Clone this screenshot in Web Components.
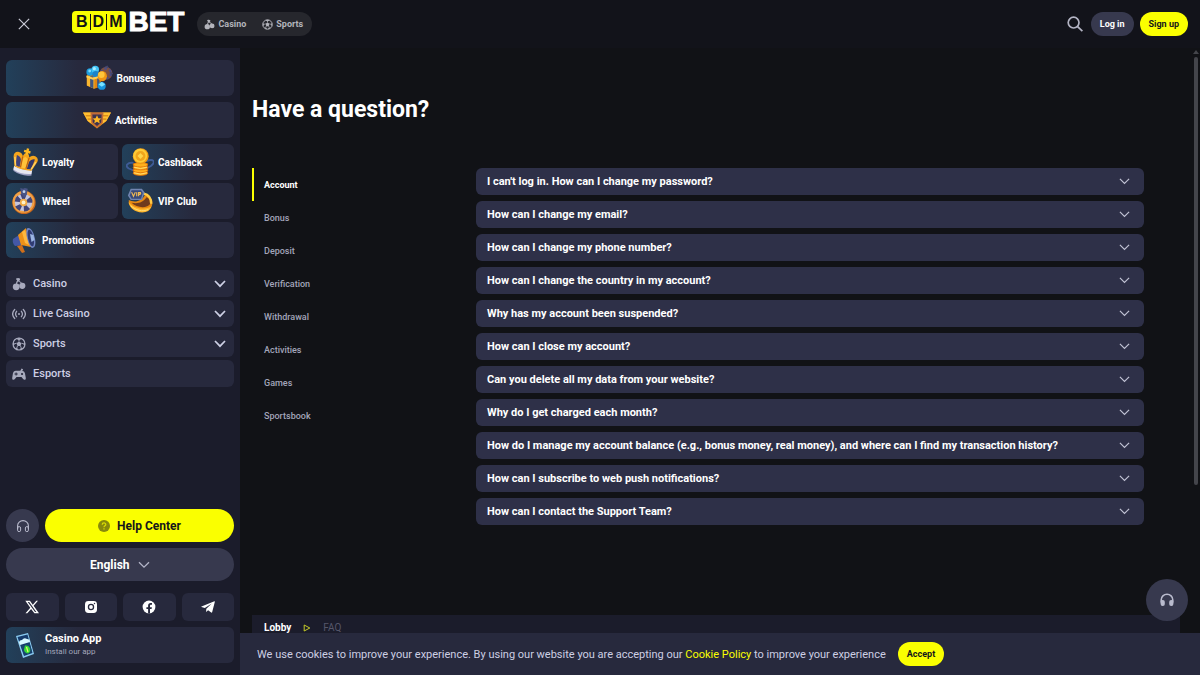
<!DOCTYPE html>
<html lang="en">
<head>
<meta charset="utf-8">
<meta name="viewport" content="width=device-width, initial-scale=1">
<title>BDMBET – FAQ</title>
<style>
  :root {
    --accent: #faff00;
    --page: #111216;
    --side: #1b1c2b;
    --tile: #27293d;
    --faq: #2e3048;
    --pill: #37394e;
    --muted: #a3a5ba;
    --soft: #cdcfe4;
  }
  html, body { height: 100%; }
  body { margin: 0; background: var(--page); color: #fff; font-family: Roboto, "Liberation Sans", sans-serif; font-size: 12px; }
</style>
</head>
<body>
<bdm-app></bdm-app>
<script>
const ICONS = {
  close: ['0 0 14 14', '<path d="M1 1l12 12M13 1L1 13" stroke="#c9cad6" stroke-width="1.4" fill="none"/>'],
  search: ['0 0 16 16', '<circle cx="6.6" cy="6.6" r="5.4" fill="none" stroke="#b3b4c4" stroke-width="1.7"/><path d="M10.6 10.6l4.8 4.6" stroke="#b3b4c4" stroke-width="1.8"/>'],
  chevron: ['0 0 12 12', '<path d="M1 3.2l5 5 5-5" fill="none" stroke="currentColor" stroke-width="1.3"/>'],
  chevronBold: ['0 0 12 12', '<path d="M1 3l5 5.2L11 3" fill="none" stroke="currentColor" stroke-width="1.7"/>'],
  cherry: ['0 0 14 14', '<g fill="currentColor"><circle cx="4.200" cy="9.800" r="3.400"/><circle cx="10.300" cy="8.800" r="3.100"/><path d="M4 1.600c1.500-.9 3-.8 4.200.2 0 1-.4 1.700-1 2.100 1.200.4 2.300 1.200 3.100 2.300l-.9.600C8.300 5.500 7.200 4.900 6 4.600c-.5.700-.8 1.500-.9 2.400H4c0-1.500.4-2.600 1.200-3.500-.7-.4-1.100-1-1.200-1.900z"/></g>'],
  live: ['0 0 14 14', '<g fill="none" stroke="currentColor" stroke-width="1.300" stroke-linecap="round"><path d="M2.700 2.500C.2 5.200.2 8.800 2.700 11.500M11.300 2.500c2.500 2.700 2.500 6.300 0 9M4.600 4.300c-1.300 1.700-1.300 3.700 0 5.400M9.400 4.300c1.300 1.700 1.300 3.700 0 5.400"/></g><circle cx="7" cy="7" r="1" fill="currentColor"/>'],
  ball: ['0 0 14 14', '<circle cx="7" cy="7" r="6" fill="none" stroke="currentColor" stroke-width="1.200"/><path d="M7 4.400l2.500 1.800-1 2.900h-3l-1-2.900zM4 1.700L7 3.200l3-1.500L7 .8zM1.200 4.500l1.300 2.700L1 9.500V5.800zM12.800 4.500l-1.300 2.700L13 9.500V5.800zM2.600 11l2.900.3.900 1.700-2-.7zM11.400 11l-2.900.3-.9 1.700 2-.7z" fill="currentColor"/><path d="M7 2.500v2M2 7l2.500-.8M12 7l-2.500-.8M5.500 9l-1 2.500M8.500 9l1 2.500" stroke="currentColor" stroke-width=".9"/>'],
  pad: ['0 0 14 14', '<path fill="currentColor" fill-rule="evenodd" d="M3.800 3.800h4.500l1.300-2.300 1.500.7-.8 1.700c1.700.1 2.400 1.200 2.700 2.700l.8 4.300c.2 2.100-1.700 2.500-2.700 1.200L9.500 10h-5l-1.600 2.100c-1 1.300-2.900.9-2.700-1.200L.9 6.600C1.200 4.900 2.200 3.800 3.800 3.800zm-.2 1.800v1H2.500v1h1.100v1h1v-1h1.100v-1H4.600v-1zM10 5.900a1.100 1.100 0 1 0 .1 2.200 1.100 1.100 0 0 0-.1-2.200z"/>'],
  phones: ['0 0 14 14', '<path d="M1.600 10V6.800a5.400 5.200 0 0 1 10.800 0V10" fill="none" stroke="currentColor" stroke-width="1.100"/><rect x="1.600" y="7.600" width="3" height="5" rx="1.400" fill="none" stroke="currentColor"/><rect x="9.400" y="7.600" width="3" height="5" rx="1.400" fill="none" stroke="currentColor"/>'],
  phonesFill: ['0 0 14 14', '<path d="M1.200 9.500V7a5.800 5.800 0 0 1 11.600 0v2.500" fill="none" stroke="currentColor" stroke-width="1.600"/><rect x=".6" y="7" width="4.200" height="6" rx="1.900" fill="currentColor"/><rect x="9.200" y="7" width="4.200" height="6" rx="1.900" fill="currentColor"/>'],
  help: ['0 0 12 12', '<circle cx="6" cy="6" r="6" fill="#87890c"/><path d="M4.200 4.700c0-2.300 3.600-2.300 3.600-.1C7.800 5.900 6 5.800 6 7.200M6 8.300v1.200" fill="none" stroke="#d9de04" stroke-width="1.200"/>'],
  x: ['0 0 14 14', '<path fill="#fff" fill-rule="evenodd" d="M.3.800h4.600l2.900 3.900L11.300.800h1.700L8.600 5.800l5.400 7.400H9.400L6.100 8.900l-3.800 4.300H.500l4.800-5.400zM2.700 2.100l7.300 9.800h1.300L4.200 2.100z"/>'],
  insta: ['0 0 14 14', '<path fill="#fff" fill-rule="evenodd" d="M4.400 1h5.200A3.400 3.400 0 0 1 13 4.400v5.200A3.400 3.400 0 0 1 9.600 13H4.400A3.400 3.400 0 0 1 1 9.600V4.400A3.400 3.400 0 0 1 4.400 1zM7 3.800a3.200 3.200 0 1 0 0 6.400 3.200 3.200 0 0 0 0-6.400zm3.500-1a.7.7 0 1 0 0 1.400.7.7 0 0 0 0-1.400zM7 5.100a1.900 1.900 0 1 1 0 3.800 1.900 1.900 0 0 1 0-3.800z"/>'],
  facebook: ['0 0 14 14', '<circle cx="7" cy="7" r="6.400" fill="#fff"/><path fill="#27293d" d="M6.100 13.400V9H4.400V7.200h1.700V5.600c0-1.700 1-2.600 2.500-2.600l1.400.1v1.600h-.9c-.8 0-1.100.5-1.100 1v1.500h1.900L9.600 9H8v4.400z"/>'],
  telegram: ['0 0 14 14', '<path fill="#fff" d="M13.400 1.200L.5 6.500c-.4.200-.3.500 0 .6l3.300 1 7-4.600-5.500 5.300-.2 3.300 2-1.800 3.100 2.200c.5.300.9.100 1-.5L13.800 2c.1-.6.100-.9-.4-.8z"/>'],
  play: ['0 0 8 8', '<path d="M1.200 1l5.600 3-5.600 3z" fill="none" stroke="#c5cb28" stroke-width="1"/>'],
  gift: ['0 0 30 28', '<circle cx="22.500" cy="9" r="6.800" fill="#7d5040"/><circle cx="22.500" cy="9" r="5.200" fill="none" stroke="#4a4d87" stroke-width="2.400" stroke-dasharray="3 2.500"/><path d="M21 2l3-1.500 2 3M27 7l3 2-2 3" fill="#41466f"/><path d="M2 11h15v12l-7 2.500L2 22z" fill="#e2860f"/><path d="M2 11l8 2.500v12L2 22z" fill="#f9b730"/><path d="M5.500 12h3.500v13l-3.500-1.300zM13 12h2.500v11.500L13 24.500z" fill="#41557f"/><circle cx="5.500" cy="7.500" r="4" fill="#1e9ddd"/><circle cx="11" cy="5" r="4" fill="#43c4f7"/><circle cx="11.500" cy="10" r="3.500" fill="#1c83c9"/><circle cx="10" cy="4" r="1.700" fill="#a8ecff"/><circle cx="5" cy="6.500" r="1.500" fill="#7fdcff"/><path d="M1.500 11.500l7 2 8.500-2v2l-8.500 2.500-7-2.500z" fill="#ffcf55"/><ellipse cx="18.500" cy="12" rx="5" ry="5.500" fill="#ee9413"/><ellipse cx="17.500" cy="10.500" rx="3.500" ry="3.500" fill="#ffc53a"/><circle cx="18" cy="22.500" r="4.200" fill="#1795dd"/><path d="M14.500 21l3.500-3 3.500 3-3.500 2.500z" fill="#79e3ff"/>'],
  badge: ['0 0 30 20', '<path d="M0 2h30l-5 9-5 4-5 4-5-4-5-4z" fill="#e88f17"/><path d="M0 2h9v12L5 11zM21 2h9l-5 9-4 3z" fill="#ffbf32"/><path d="M3 5.500h6M5 9h4M27 5.500h-6M25 9h-4" stroke="#c8740f"/><path d="M8 2h14l-1 11-6 5.500L9 13z" fill="#c26a38"/><path d="M10 4h10l-.5 8.500-4.500 4-4.500-4z" fill="#3c3350"/><path d="M15 5l1.500 3 3.300.3-2.500 2.200.7 3.300-3-1.800-3 1.800.7-3.300L10.200 8.300l3.300-.3z" fill="#ffb824"/>'],
  crown: ['0 0 28 30', '<g transform="rotate(14 14 16)"><path d="M5 22.500h19l1 4.500q-10 4-20 0z" fill="#9ea1c4"/><path d="M4.500 21.500q10 3 20 0v4q-10 3.500-20 0z" fill="#e6e7f1"/><path d="M1.500 12q-1-5 3.500-6 4-.5 6 3 1-4 3.500-4t3.500 4q2-3.500 6-3 4.500 1 3.500 6l-3.500 10q-9 2.500-19 0z" fill="#f5a51c"/><path d="M4.500 9.500q4 0 5.500 4l.5 8-4.500-.7z" fill="#3f427a"/><path d="M24.500 9.500q-4 0-5.500 4l-.5 8 4.500-.7z" fill="#343768"/><path d="M12 21.500l-.5-8q1-4 3-4t3 4l-.5 8z" fill="#ffc23a"/><path d="M11 9.500l.5 12M18 9.500l-.5 12" stroke="#bf6110" stroke-width="1.300"/><path d="M3 12l3 9M26 12l-3 9" stroke="#ffd262" stroke-width="1.500"/><path d="M13.200 0h2.600v2.200H18v2.600h-2.200V7h-2.600V4.800H11V2.200h2.200z" fill="#ffb923"/></g>'],
  coins: ['0 0 30 30', '<path d="M8 16c-6-1-10 3-5 6l5 2M22 14c8-3 10 1 5 5l-5 3" fill="none" stroke="#3f5c97" stroke-width="2"/><path d="M8 16h15v11q-8 4-15 0z" fill="#e87d0b"/><g fill="#ffb01c" stroke="#d96c08" stroke-width=".8"><ellipse cx="15.500" cy="27" rx="7.800" ry="2.400"/><ellipse cx="15.500" cy="24" rx="7.800" ry="2.400"/><ellipse cx="15.500" cy="21" rx="7.800" ry="2.400"/><ellipse cx="15.500" cy="18" rx="7.800" ry="2.400"/></g><path d="M8.500 26.500q7 3 14 0M8.500 20.500q7 3 14 0" stroke="#ffe070" fill="none"/><circle cx="15.800" cy="8.800" r="8.500" fill="#ee9a15"/><circle cx="15.200" cy="8.300" r="7.500" fill="#ffcb35"/><circle cx="15.500" cy="8.500" r="5.300" fill="#f1a51b"/><path d="M12.300 8.500l3.200-3.200 3.200 3.200-3.200 3.200z" fill="#ffd54a"/>'],
  wheel: ['0 0 28 30', '<circle cx="14" cy="16.500" r="12.500" fill="#c9681c"/><circle cx="13.500" cy="16" r="11.700" fill="#f0a045"/><circle cx="13.500" cy="16.500" r="9.300" fill="#c4c5de"/><g fill="#424578"><path d="M13.500 16.500L10 7.500q3.500-1.500 7 0zM13.500 16.500l7.500-6q2.500 3 2 6.500zM13.500 16.500l7 7q-3 3-6.500 2.700zM13.500 16.500l-4 9q-3.500-1.500-5-4.500zM13.500 16.500l-9.500-1q.5-4 3-6z"/></g><circle cx="13.500" cy="16.500" r="4" fill="#f2ad49"/><circle cx="13.500" cy="16.500" r="2" fill="#fff2cb"/><path d="M10 1l3 1 2-1 3 1-1 6-3 3-3-4z" fill="#4a5485"/><circle cx="14" cy="5" r="1.500" fill="#c3d3ee"/>'],
  ring: ['0 0 30 28', '<path d="M3 13c4 2 13 4 18-7 7 3 9 10 6 15-4 6-19 3-24-4z" fill="#e68912"/><path d="M6 16c6 6 17 6 20 1 1-3-1-6-4-7-4 6-9 7-16 6z" fill="#6f3b1d"/><path d="M3 15c5 7 17 9 24 5-1 6-9 8-16 5-5-2-8-6-8-10z" fill="#ffb529"/><path d="M5 19c5 5 13 7 19 4" fill="none" stroke="#ffe07c"/><path d="M19 6c5 1 8 5 8 11" fill="none" stroke="#ffca45" stroke-width="2.500"/><path d="M5 1h12l3 4-3 8H5L2 8z" fill="#7185b0"/><path d="M6 2.500h10l2 3-2 6H6L4 8z" fill="#384a7b"/><path d="M6 4.500l2 4.500 2-4.500M11.500 4.500V9M13.500 9V5h2q1 2-2 2" fill="none" stroke="#f3bc52" stroke-width="1.200"/>'],
  horn: ['0 0 28 28', '<path d="M3 13l9-6 3 12-10 1q-3-3-2-7z" fill="#4458a6"/><path d="M8 9l8-7 5 19-10-2z" fill="#ee9118"/><path d="M12 6l3-2 4 15-4-2z" fill="#ffb840"/><path d="M7 20l5-1 3 7-3 1z" fill="#cf6f1b"/><path d="M18 2c4 0 6 6 7 11s0 9-3 9c-4-2-8-19-4-20z" fill="#7186c4"/><ellipse cx="20.800" cy="12" rx="2.800" ry="8.500" transform="rotate(-12 20.800 12)" fill="#303c73"/><path d="M20 8l3.500 1 1 5-3 2z" fill="#9cb7e4"/>'],
  device: ['0 0 22 28', '<path d="M2 5l12-3 6 21-11 4z" fill="#8acbf1"/><path d="M3.500 6l10-2.500 5 18.500-8.500 3z" fill="#153b6b"/><path d="M5 12q0-3 3-3 2-3 5-1 3 0 3 3l-10 3z" fill="#d7f7ff"/><path d="M7 15l8.500-3 2.500 9-8 3z" fill="#17466f"/><path d="M11 14.500q4-.5 5 3t-2 5q-4-1-4-4z" fill="#36d838"/><path d="M12.500 16l1.500 5" stroke="#dfff65" stroke-width="1.200"/>']
};

/* Small helper: registers an element whose shadow root is filled from its own markup. */
function define(name, styles, markup) {
  customElements.define(name, class extends HTMLElement {
    connectedCallback() {
      if (this.shadowRoot) return;
      const tpl = document.createElement('template');
      tpl.innerHTML = `<style>*{box-sizing:border-box}button,select{font:inherit;color:inherit;border:0;margin:0;cursor:pointer}a{color:inherit;text-decoration:none}${styles}</style>${typeof markup === 'function' ? markup(this) : markup}`;
      this.attachShadow({ mode: 'open' }).append(tpl.content.cloneNode(true));
    }
  });
}

define('bdm-icon',
  ':host{display:block;flex:none;width:var(--w,14px);height:var(--h,var(--w,14px))}svg{display:block;width:100%;height:100%}',
  el => { const [box, art] = ICONS[el.getAttribute('name')]; return `<svg viewBox="${box}" aria-hidden="true">${art}</svg>`; });

define('bdm-logo', `
  :host{display:block}
  a{display:flex;align-items:center;gap:2px;font-family:"Liberation Sans",Arial,sans-serif;font-weight:700}
  .box{display:flex;align-items:center;height:22px;padding:0 4px;border-radius:4px;background:var(--accent);color:#111216;font-size:16px;line-height:22px}
  .box span+span{border-left:1px solid #111216;padding-left:2px;margin-left:2px;line-height:16px}
  .bet{font-size:28px;line-height:24px;-webkit-text-stroke:1px #fff}`,
  '<a href="#" aria-label="BDMBET"><span class="box"><span>B</span><span>D</span><span>M</span></span><span class="bet">BET</span></a>');

define('bdm-header', `
  :host{display:flex;align-items:center;height:48px;padding:0 12px 0 18px;background:#12131a}
  .close{padding:0;background:none;--w:12px}
  bdm-logo{margin:0 13px 4px 42px}
  nav{display:flex;gap:16px;align-items:center;height:24px;padding:0 9px 0 7px;border-radius:12px;background:#26272d;color:#b3b4bb;font-size:9px;font-weight:700}
  nav a{display:flex;align-items:center;gap:3px;--w:11px}
  .end{display:flex;align-items:center;gap:6px;margin-left:auto}
  .find{padding:0;background:none;margin-right:2px;--w:16px}
  .pill{height:24px;padding:0 9px;border-radius:12px;font-size:9px;font-weight:700;background:var(--pill)}
  .pill.up{background:var(--accent);color:#15161b}`, `
  <button class="close" aria-label="Close menu"><bdm-icon name="close"></bdm-icon></button>
  <bdm-logo></bdm-logo>
  <nav><a href="#casino"><bdm-icon name="cherry"></bdm-icon>Casino</a><a href="#sports"><bdm-icon name="ball"></bdm-icon>Sports</a></nav>
  <div class="end"><button class="find" aria-label="Search"><bdm-icon name="search"></bdm-icon></button>
  <button class="pill">Log in</button><button class="pill up">Sign up</button></div>`);

define('promo-tile', `
  :host{display:block}
  a{display:flex;align-items:center;gap:4px;height:36px;padding:0 4px;border-radius:6px;font-size:10px;font-weight:700;background:linear-gradient(90deg,#22405a,var(--tile) 72px);--w:28px}
  :host([center]) a{justify-content:center}`,
  el => `<a href="#"><bdm-icon name="${el.getAttribute('icon')}"></bdm-icon><slot></slot></a>`);

define('menu-row', `
  :host{display:block}
  button{display:flex;align-items:center;gap:7px;width:100%;height:27px;padding:0 8px 0 6px;border-radius:6px;background:var(--tile);color:var(--soft);font-size:11px;font-weight:500;--w:14px}
  bdm-icon:first-of-type{color:#a8aabd}
  .arrow{margin-left:auto;--w:12px}`,
  el => `<button><bdm-icon name="${el.getAttribute('icon')}"></bdm-icon><slot></slot>${el.hasAttribute('more') ? '<bdm-icon class="arrow" name="chevronBold"></bdm-icon>' : ''}</button>`);

define('bdm-sidebar', `
  :host{display:flex;flex-direction:column;padding:12px 6px;background:var(--side)}
  .promos{display:grid;grid-template-columns:1fr 1fr;gap:3px 4px}
  .top{display:grid;gap:6px;margin-bottom:6px}
  .wide{grid-column:1/-1}
  nav{display:grid;gap:3px;margin-top:12px}
  .foot{margin-top:auto;display:grid;gap:6px}
  .help{display:flex;gap:6px}
  .chat{flex:none;width:33px;height:33px;padding:0;display:grid;place-items:center;border-radius:50%;background:var(--pill);color:#b9bbcd}
  .center{flex:1;display:flex;justify-content:center;align-items:center;gap:7px;height:33px;border-radius:17px;background:var(--accent);color:#15161b;font-size:12px;font-weight:700;--w:12px}
  .lang{display:flex;justify-content:center;align-items:center;gap:8px;height:33px;border-radius:17px;background:var(--pill);font-size:12px;font-weight:700;--w:12px}
  .lang bdm-icon{color:#b3b5c8}
  select{appearance:none;background:none;padding:0}
  .social{display:grid;grid-template-columns:repeat(4,1fr);gap:6px;margin-top:6px}
  .social a{display:grid;place-items:center;height:28px;border-radius:6px;background:var(--tile)}
  .app{display:flex;align-items:center;gap:9px;height:36px;padding-left:8px;border-radius:6px;background:linear-gradient(90deg,#22405a,var(--tile) 72px);--w:22px;--h:28px}
  .app b{display:block;font-size:11px;line-height:14px}
  .app small{display:block;font-size:8px;line-height:12px;color:var(--muted)}`, `
  <div class="top"><promo-tile center icon="gift">Bonuses</promo-tile><promo-tile center icon="badge">Activities</promo-tile></div>
  <div class="promos"><promo-tile icon="crown">Loyalty</promo-tile><promo-tile icon="coins">Cashback</promo-tile><promo-tile icon="wheel">Wheel</promo-tile><promo-tile icon="ring">VIP Club</promo-tile><promo-tile class="wide" icon="horn">Promotions</promo-tile></div>
  <nav><menu-row icon="cherry" more>Casino</menu-row><menu-row icon="live" more>Live Casino</menu-row><menu-row icon="ball" more>Sports</menu-row><menu-row icon="pad">Esports</menu-row></nav>
  <div class="foot">
    <div class="help"><button class="chat" aria-label="Support"><bdm-icon name="phones"></bdm-icon></button><a class="center" href="#help"><bdm-icon name="help"></bdm-icon>Help Center</a></div>
    <div class="lang"><select aria-label="Language"><option>English</option></select><bdm-icon name="chevron"></bdm-icon></div>
    <div class="social"><a href="#x" aria-label="X"><bdm-icon name="x"></bdm-icon></a><a href="#instagram" aria-label="Instagram"><bdm-icon name="insta"></bdm-icon></a><a href="#facebook" aria-label="Facebook"><bdm-icon name="facebook"></bdm-icon></a><a href="#telegram" aria-label="Telegram"><bdm-icon name="telegram"></bdm-icon></a></div>
    <a class="app" href="#app"><bdm-icon name="device"></bdm-icon><span><b>Casino App</b><small>Install our app</small></span></a>
  </div>`);

define('faq-tab', `
  :host{display:block}
  a{display:flex;align-items:center;height:33px;padding-left:10px;border-left:2px solid transparent;color:var(--muted);font-size:9px;font-weight:500}
  :host([active]) a{border-color:var(--accent);color:#fff;font-weight:700}`,
  '<a href="#"><slot></slot></a>');

define('faq-item', `
  :host{display:block}
  button{display:flex;align-items:center;justify-content:space-between;gap:12px;width:100%;min-height:27px;padding:0 14px 0 11px;border-radius:6px;background:var(--faq);font-size:11px;font-weight:700;text-align:left;--w:11px}
  bdm-icon{color:#c0c2d4}`,
  '<button aria-expanded="false"><slot></slot><bdm-icon name="chevron"></bdm-icon></button>');

const TABS = ['Account', 'Bonus', 'Deposit', 'Verification', 'Withdrawal', 'Activities', 'Games', 'Sportsbook'];
const QUESTIONS = [
  "I can't log in. How can I change my password?",
  'How can I change my email?',
  'How can I change my phone number?',
  'How can I change the country in my account?',
  'Why has my account been suspended?',
  'How can I close my account?',
  'Can you delete all my data from your website?',
  'Why do I get charged each month?',
  'How do I manage my account balance (e.g., bonus money, real money), and where can I find my transaction history?',
  'How can I subscribe to web push notifications?',
  'How can I contact the Support Team?'
];

define('faq-page', `
  :host{display:block;padding:44px 20px 0 12px;overflow:hidden}
  h1{margin:0 0 40px;font-size:23px;line-height:36px;font-weight:700}
  .cols{display:grid;grid-template-columns:200px 1fr;gap:24px;padding-right:36px}
  .list{display:grid;gap:6px;align-content:start}
  .crumbs{display:flex;align-items:center;gap:12px;height:25px;margin-top:90px;padding:0 12px;background:#1b1c2b;font-size:10px;--w:8px}
  .crumbs a{font-weight:700}
  .crumbs span{color:#55566a}`, `
  <h1>Have a question?</h1>
  <div class="cols"><nav>${TABS.map((t, i) => `<faq-tab${i ? '' : ' active'}>${t}</faq-tab>`).join('')}</nav>
  <div class="list">${QUESTIONS.map(q => `<faq-item>${q}</faq-item>`).join('')}</div></div>
  <div class="crumbs"><a href="#lobby">Lobby</a><bdm-icon name="play"></bdm-icon><span>FAQ</span></div>`);

define('cookie-bar', `
  :host{display:flex;align-items:center;gap:12px;height:42px;padding:0 17px;background:var(--tile);color:var(--soft);font-size:11px;font-weight:400}
  p{margin:0}
  a{color:var(--accent)}
  button{height:24px;padding:0 9px;border-radius:12px;background:var(--accent);color:#15161b;font-size:9px;font-weight:700}`,
  '<p>We use cookies to improve your experience. By using our website you are accepting our <a href="#cookies">Cookie Policy</a> to improve your experience</p><button>Accept</button>');

define('bdm-app', `
  :host{display:grid;grid-template:auto minmax(0,1fr)/240px minmax(0,1fr);height:100vh;position:relative;overflow:hidden}
  bdm-header{grid-column:1/-1}
  cookie-bar{position:absolute;left:240px;right:0;bottom:0}
  .chat{position:absolute;right:12px;bottom:54px;width:42px;height:42px;padding:0;display:grid;place-items:center;border-radius:50%;background:var(--pill);color:#b9bbcd}
  .bar{position:absolute;right:1px;top:50px;display:grid;gap:3px}
  .bar::before{content:"";border:3px solid transparent;border-top:0;border-bottom:4px solid #44454b}
  .bar::after{content:"";width:4px;height:428px;margin:auto;border-radius:2px;background:#44454b}`, `
  <bdm-header></bdm-header><bdm-sidebar></bdm-sidebar><faq-page></faq-page>
  <div class="bar"></div><cookie-bar></cookie-bar><button class="chat" aria-label="Open chat"><bdm-icon name="phonesFill"></bdm-icon></button>`);
</script>
</body>
</html>
